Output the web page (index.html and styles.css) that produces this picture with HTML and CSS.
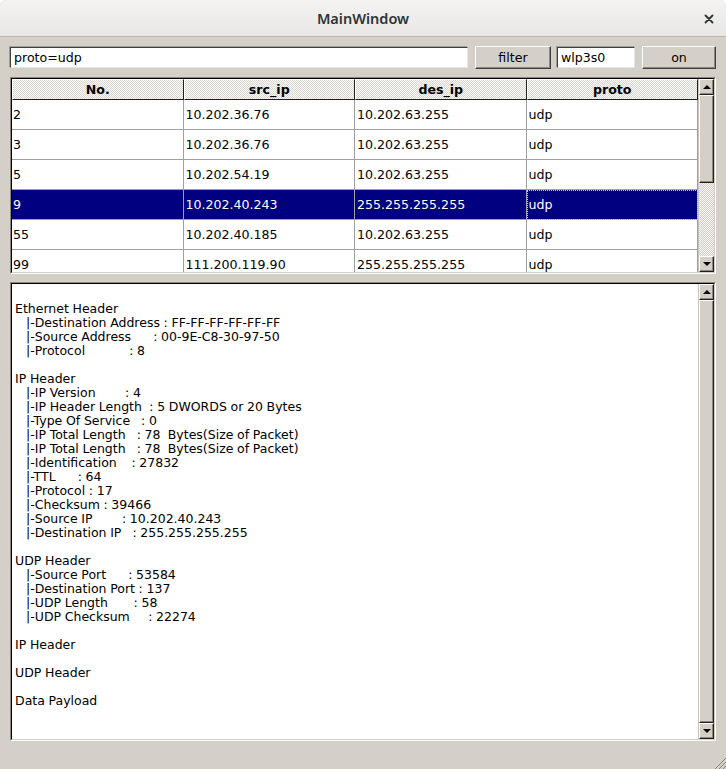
FILE: index.html
```html
<!DOCTYPE html>
<html lang="en">
<head>
<meta charset="utf-8">
<title>MainWindow</title>
<link rel="stylesheet" href="styles.css">
</head>
<body>
<div class="window">
  <header class="titlebar">
    <span class="title">MainWindow</span>
    <svg class="close" width="10" height="10" viewBox="0 0 10 10" aria-hidden="true"><path d="M1.5 1.5 L8.5 8.5 M8.5 1.5 L1.5 8.5" stroke="#2e3436" stroke-width="1.8" stroke-linecap="round"/></svg>
  </header>
  <main class="content">
    <div class="toolbar">
      <div class="field field-filter">proto=udp</div>
      <div class="btn btn-filter">filter</div>
      <div class="field field-dev">wlp3s0</div>
      <div class="btn btn-on">on</div>
    </div>

    <div class="frame frame-table">
      <div class="frame-inner">
        <div class="table-view">
          <table class="packets">
            <thead>
              <tr><th>No.</th><th>src_ip</th><th>des_ip</th><th>proto</th></tr>
            </thead>
            <tbody>
              <tr><td>2</td><td>10.202.36.76</td><td>10.202.63.255</td><td>udp</td></tr>
              <tr><td>3</td><td>10.202.36.76</td><td>10.202.63.255</td><td>udp</td></tr>
              <tr><td>5</td><td>10.202.54.19</td><td>10.202.63.255</td><td>udp</td></tr>
              <tr class="selected"><td>9</td><td>10.202.40.243</td><td>255.255.255.255</td><td class="focus">udp</td></tr>
              <tr><td>55</td><td>10.202.40.185</td><td>10.202.63.255</td><td>udp</td></tr>
              <tr><td>99</td><td>111.200.119.90</td><td>255.255.255.255</td><td>udp</td></tr>
            </tbody>
          </table>
        </div>
        <div class="scrollbar">
          <div class="sb-btn"><span class="arrow-up"></span></div>
          <div class="sb-track">
            <div class="sb-thumb thumb-table"></div>
          </div>
          <div class="sb-btn"><span class="arrow-down"></span></div>
        </div>
      </div>
    </div>

    <div class="frame frame-text">
      <div class="frame-inner">
        <pre class="detail">

Ethernet Header
   |-Destination Address : FF-FF-FF-FF-FF-FF
   |-Source Address      : 00-9E-C8-30-97-50
   |-Protocol            : 8

IP Header
   |-IP Version        : 4
   |-IP Header Length  : 5 DWORDS or 20 Bytes
   |-Type Of Service   : 0
   |-IP Total Length   : 78  Bytes(Size of Packet)
   |-IP Total Length   : 78  Bytes(Size of Packet)
   |-Identification    : 27832
   |-TTL      : 64
   |-Protocol : 17
   |-Checksum : 39466
   |-Source IP        : 10.202.40.243
   |-Destination IP   : 255.255.255.255

UDP Header
   |-Source Port      : 53584
   |-Destination Port : 137
   |-UDP Length       : 58
   |-UDP Checksum     : 22274

IP Header

UDP Header

Data Payload</pre>
        <div class="scrollbar">
          <div class="sb-btn"><span class="arrow-up"></span></div>
          <div class="sb-track">
            <div class="sb-thumb thumb-text"></div>
          </div>
          <div class="sb-btn"><span class="arrow-down"></span></div>
        </div>
      </div>
    </div>
  </main>
  <svg class="grip" width="12" height="12" viewBox="0 0 12 12" aria-hidden="true">
    <path d="M12 1 L1 12 M12 5 L5 12 M12 9 L9 12" stroke="#8a8580" stroke-width="1"/>
  </svg>
</div>
</body>
</html>
```

FILE: styles.css
```css
* { box-sizing: border-box; }

html, body {
  margin: 0;
  padding: 0;
  background: #ffffff;
}

body {
  font-family: "DejaVu Sans", "Liberation Sans", sans-serif;
  font-size: 12.6px;
  color: #000;
}

.window {
  position: relative;
  width: 726px;
  height: 769px;
  display: flex;
  flex-direction: column;
  background: #d4d0c8;
  border-radius: 6px 6px 0 0;
  overflow: hidden;
}

/* ---------- title bar ---------- */
.titlebar {
  flex: 0 0 37px;
  display: flex;
  align-items: center;
  justify-content: center;
  position: relative;
  background: linear-gradient(#f4f3f2, #e8e7e6);
  border-bottom: 1px solid #bdb8b2;
}

.title {
  font-family: "Noto Sans", "DejaVu Sans", sans-serif;
  font-weight: 600;
  font-size: 14.5px;
  color: #2e3436;
  margin-top: -1px;
}

.close {
  position: absolute;
  right: 12px;
  top: 14px;
}

/* ---------- content ---------- */
.content {
  flex: 1;
  display: flex;
  flex-direction: column;
  padding: 9px 10px 28px 10px;
  gap: 8px;
}

.toolbar {
  display: flex;
  align-items: center;
  height: 23px;
}

.field {
  height: 21px;
  background: #fff;
  border: 1px solid;
  border-color: #404040 #e8e6e2 #e8e6e2 #404040;
  box-shadow: -1px -1px 0 #a09c96;
  padding: 0 3px;
  line-height: 19px;
  white-space: nowrap;
  overflow: hidden;
}

.field-filter { width: 458px; }
.field-dev { width: 78px; margin-left: 6px; }

.btn {
  height: 23px;
  display: flex;
  align-items: center;
  justify-content: center;
  background: #d4d0c8;
  border: 1px solid;
  border-color: #ffffff #404040 #404040 #ffffff;
  box-shadow: inset -1px -1px 0 #8c8880;
}

.btn-filter { width: 76px; margin-left: 7px; }
.btn-on { width: 74px; margin-left: 7px; }

/* ---------- sunken frames ---------- */
.frame {
  border: 1px solid;
  border-color: #8c8880 #ffffff #ffffff #8c8880;
}

.frame-inner {
  height: 100%;
  display: flex;
  border: 1px solid;
  border-color: #000 #d4d0c8 #d4d0c8 #000;
  background: #fff;
}

.frame-table { height: 197px; }
.frame-text { height: 459px; }

/* ---------- table ---------- */
.table-view {
  flex: 1;
  overflow: hidden;
}

.packets {
  width: 100%;
  table-layout: fixed;
  border-collapse: separate;
  border-spacing: 0;
}

.packets th {
  height: 21px;
  padding: 0;
  font-weight: bold;
  text-align: center;
  background: repeating-conic-gradient(#d9d6d0 0 25%, #fbfbfb 0 50%) 0 0 / 2px 2px;
  border-top: 1px solid #ffffff;
  border-left: 1px solid #ffffff;
  border-right: 1px solid #202020;
  border-bottom: 1px solid #202020;
}

.packets td {
  height: 30px;
  padding: 0 0 0 2px;
  border-right: 1px solid #a0a0a0;
  border-bottom: 1px solid #a0a0a0;
  white-space: nowrap;
  overflow: hidden;
}

.packets td:first-child { padding-left: 1px; }

.packets tr.selected td {
  background: #000080;
  color: #fff;
}

.packets td.focus {
  outline: 1px dotted #e8d860;
  outline-offset: -1px;
}

/* ---------- scrollbars ---------- */
.scrollbar {
  flex: 0 0 16px;
  display: flex;
  flex-direction: column;
  background: repeating-conic-gradient(#d4d0c8 0 25%, #f4f3f0 0 50%) 0 0 / 2px 2px;
  border-left: 1px solid #c8c4bc;
}

.sb-btn,
.sb-thumb {
  background: #d4d0c8;
  border: 1px solid;
  border-color: #ffffff #202020 #202020 #ffffff;
  box-shadow: inset -1px -1px 0 #8c8880;
}

.sb-btn {
  flex: 0 0 16px;
  display: flex;
  align-items: center;
  justify-content: center;
}

.sb-track {
  flex: 1;
  display: flex;
  flex-direction: column;
}

.thumb-table { height: 88px; }
.thumb-text { flex: 1; }

.arrow-up,
.arrow-down {
  width: 0;
  height: 0;
  border-left: 4px solid transparent;
  border-right: 4px solid transparent;
}

.arrow-up { border-bottom: 4px solid #000; }
.arrow-down { border-top: 4px solid #000; }

/* ---------- detail text ---------- */
.detail {
  flex: 1;
  margin: 0;
  padding: 4px 3px 0 3px;
  font-family: "DejaVu Sans", "Liberation Sans", sans-serif;
  font-size: 12.5px;
  line-height: 14px;
  word-spacing: -0.3px;
  white-space: pre;
  overflow: hidden;
}

/* ---------- resize grip ---------- */
.grip {
  position: absolute;
  right: 0;
  bottom: 0;
}
```
